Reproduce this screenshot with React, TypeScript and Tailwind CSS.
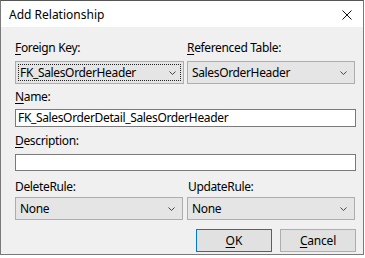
import React from "react";

const font = { fontFamily: '"Noto Sans", "Liberation Sans", sans-serif' };

function Chevron() {
  return (
    <svg width="7" height="4" viewBox="0 0 7 4" className="shrink-0">
      <path d="M0.5 0.5 L3.5 3.5 L6.5 0.5" fill="none" stroke="#444" strokeWidth="1" />
    </svg>
  );
}

function Combo({ text, focused }: { text: string; focused?: boolean }) {
  return (
    <div className="h-[23px] border border-[#adadad] bg-[#e5e5e5] p-[2px]">
      <div
        className={`flex h-full items-center justify-between pl-[1px] pr-[4px] ${
          focused ? "border border-dotted border-[#222]" : "border border-transparent"
        }`}
      >
        <span className="text-[12px] leading-none tracking-[-0.35px] text-black">{text}</span>
        <Chevron />
      </div>
    </div>
  );
}

function Label({ u, post, className }: { u?: string; post: string; className?: string }) {
  return (
    <div className={`h-[16px] text-[12px] leading-[16px] tracking-[-0.35px] text-black ${className ?? ""}`}>
      {u ? <span className="underline underline-offset-2">{u}</span> : null}
      {post}
    </div>
  );
}

export default function App() {
  return (
    <div className="h-[258px] w-[365px] bg-white" style={font}>
      <div className="flex h-[255px] w-[364px] flex-col border border-[#7a7a7a] border-t-[#555] bg-[#f0f0f0]">
        <div className="flex h-[26px] shrink-0 items-center justify-between bg-white pl-[8px] pr-[11px] pt-[2px]">
          <span className="text-[12px] text-black">Add Relationship</span>
          <svg width="10" height="10" viewBox="0 0 10 10">
            <path d="M0.5 0.5 L9.5 9.5 M9.5 0.5 L0.5 9.5" stroke="#111" strokeWidth="1" />
          </svg>
        </div>
        <div className="flex shrink-0 flex-col pl-[14px] pt-[13px]">
          <div className="grid w-[340px] grid-cols-[169px_168px] gap-x-[3px]">
            <Label u="F" post="oreign Key:" />
            <Label u="R" post="eferenced Table:" />
          </div>
          <div className="mt-[5px] grid w-[340px] grid-cols-[169px_168px] gap-x-[3px]">
            <Combo text="FK_SalesOrderHeader" focused />
            <Combo text="SalesOrderHeader" />
          </div>
          <Label u="N" post="ame:" className="mt-[5px]" />
          <div className="mt-[4px] flex h-[18px] w-[341px] items-center border border-[#7a7a7a] bg-white px-[2px] text-[12px] tracking-[-0.35px] text-black">
            FK_SalesOrderDetail_SalesOrderHeader
          </div>
          <Label u="D" post="escription:" className="mt-[6px]" />
          <div className="mt-[5px] h-[17px] w-[341px] border border-[#7a7a7a] bg-white" />
          <div className="mt-[8px] grid w-[340px] grid-cols-[168px_168px] gap-x-[5px]">
            <Label post="DeleteRule:" />
            <Label post="UpdateRule:" />
          </div>
          <div className="mt-[2px] grid w-[340px] grid-cols-[168px_168px] gap-x-[4px]">
            <Combo text="None" />
            <Combo text="None" />
          </div>
          <div className="mt-[9px] flex w-[341px] justify-end gap-[8px]">
            <div className="flex h-[23px] w-[76px] items-center justify-center border border-[#0078d7] bg-[#e1e1e1] text-[12px] text-black">
              <span className="underline underline-offset-2">O</span>K
            </div>
            <div className="flex h-[23px] w-[76px] items-center justify-center border border-[#adadad] bg-[#e1e1e1] text-[12px] tracking-[-0.2px] text-black">
              <span className="underline underline-offset-2">C</span>ancel
            </div>
          </div>
        </div>
      </div>
    </div>
  );
}
